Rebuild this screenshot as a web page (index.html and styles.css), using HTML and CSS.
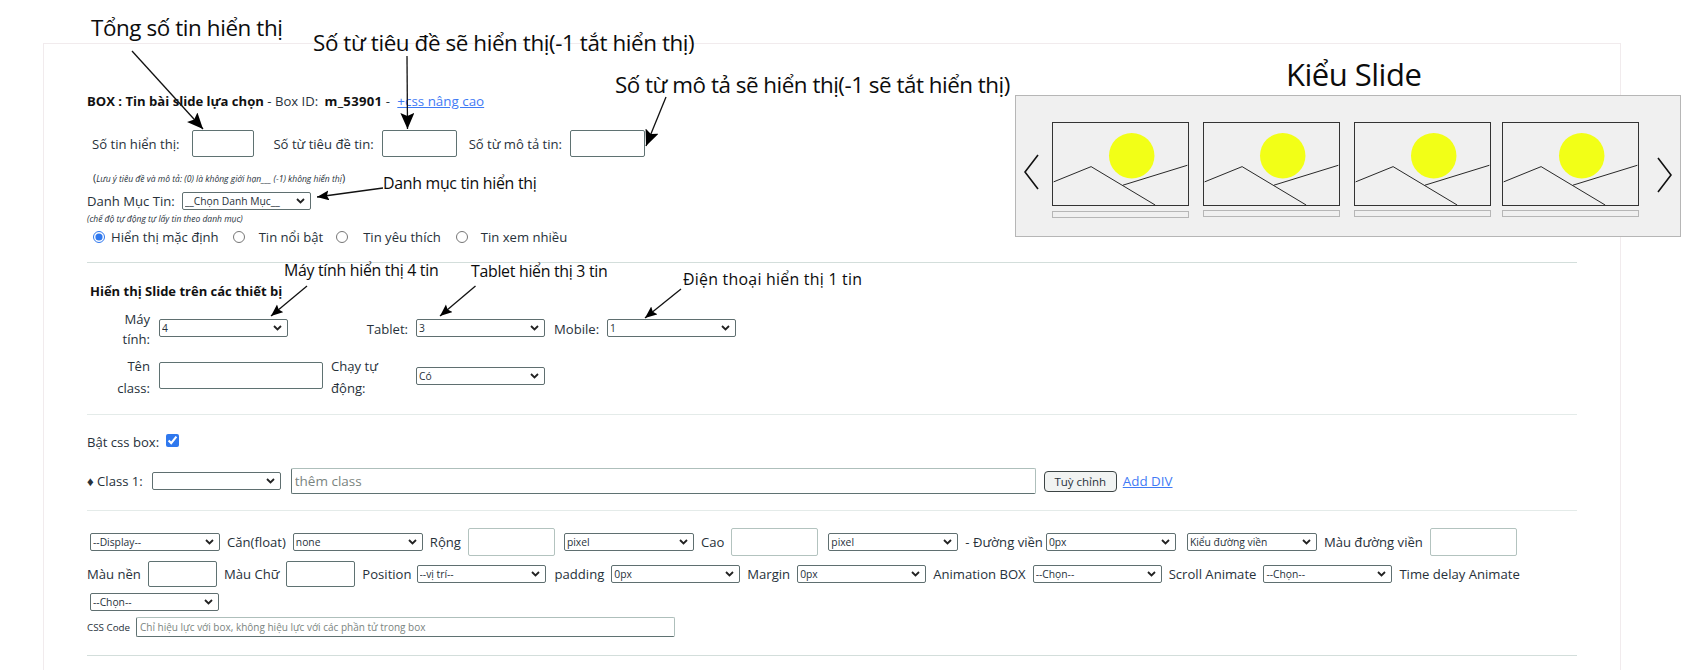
FILE: index.html
```html
<!DOCTYPE html>
<html lang="vi">
<head>
<meta charset="utf-8">
<title>Tin bài slide lựa chọn</title>
<link rel="stylesheet" href="styles.css">
</head>
<body>
<main class="card">
  <div class="head"><b>BOX : Tin bài slide lựa chọn</b> - Box ID: <b class="box-id">m_53901</b> - <a href="#" class="adv">+css nâng cao</a></div>

  <div class="row counts">
    <label class="c1">Số tin hiển thị:</label><input class="field f-count1">
    <label class="c2">Số từ tiêu đề tin:</label><input class="field f-count2">
    <label class="c3">Số từ mô tả tin:</label><input class="field f-count2">
  </div>
  <div class="note"><span class="paren">(</span>Lưu ý tiêu đề và mô tả: (0) là không giới hạn___ (-1) không hiển thị<span class="paren">)</span></div>
  <div class="row cat">
    <label>Danh Mục Tin:</label>
    <select class="sel"><option>__Chọn Danh Mục__</option></select>
  </div>
  <div class="note2">(chế độ tự động tự lấy tin theo danh mục)</div>
  <div class="row radios">
    <input type="radio" name="t" class="r1" checked><label class="t1">Hiển thị mặc định</label>
    <input type="radio" name="t" class="r2"><label class="t2">Tin nổi bật</label>
    <input type="radio" name="t" class="r3"><label class="t3">Tin yêu thích</label>
    <input type="radio" name="t" class="r4"><label class="t4">Tin xem nhiều</label>
  </div>

  <hr class="rule r-a">
  <div class="subhead">Hiển thị Slide trên các thiết bị</div>
  <div class="devices">
    <label class="dl dl-wrap lh20">Máy tính:</label>
    <div class="dc"><select class="sel"><option>4</option></select></div>
    <label class="dl">Tablet:</label>
    <div class="dc"><select class="sel"><option>3</option></select></div>
    <label class="dl">Mobile:</label>
    <div class="dc"><select class="sel"><option>1</option></select></div>
    <label class="dl dl-wrap lh22">Tên class:</label>
    <div class="dc"><input class="field f-class"></div>
    <label class="dl dl-left lh22">Chạy tự động:</label>
    <div class="dc"><select class="sel"><option>Có</option></select></div>
  </div>

  <hr class="rule r-b">
  <div class="row toggle">
    <label>Bật css box:</label><input type="checkbox" class="check" checked>
  </div>
  <div class="row classes">
    <label>♦ Class 1:</label>
    <select class="sel s-class"><option></option></select>
    <input class="field f-wide" placeholder="thêm class">
    <button class="btn" type="button">Tuỳ chỉnh</button>
    <a href="#" class="add">Add DIV</a>
  </div>

  <hr class="rule r-c">
  <div class="row opts o1">
    <select class="sel s130 first"><option>--Display--</option></select>
    <label>Căn(float)</label>
    <select class="sel s130"><option>none</option></select>
    <label>Rộng</label>
    <input class="field f-soft w87">
    <select class="sel s130 gap-m"><option>pixel</option></select>
    <label>Cao</label>
    <input class="field f-soft w87">
    <select class="sel s130 gap-l"><option>pixel</option></select>
    <label>- Đường viền</label>
    <select class="sel s130 tight"><option>0px</option></select>
    <select class="sel s130 gap-x"><option>Kiểu đường viền</option></select>
    <label>Màu đường viền</label>
    <input class="field f-soft w87">
  </div>
  <div class="row opts o2">
    <label>Màu nền</label>
    <input class="field w69">
    <label>Màu Chữ</label>
    <input class="field w69">
    <label>Position</label>
    <select class="sel pull"><option>--vị trí--</option></select>
    <label class="push">padding</label>
    <select class="sel"><option>0px</option></select>
    <label>Margin</label>
    <select class="sel"><option>0px</option></select>
    <label>Animation BOX</label>
    <select class="sel"><option>--Chọn--</option></select>
    <label>Scroll Animate</label>
    <select class="sel"><option>--Chọn--</option></select>
    <label>Time delay Animate</label>
  </div>
  <div class="row o3"><select class="sel first"><option>--Chọn--</option></select></div>
  <div class="row o4">
    <label>CSS Code</label>
    <input class="field f-code" placeholder="Chỉ hiệu lực với box, không hiệu lực với các phần tử trong box">
  </div>
  <hr class="rule r-d">
</main>

<aside class="panel">
  <svg class="chev" viewBox="0 0 16 36" width="16" height="36"><path d="M14 1 1 18 14 35"/></svg>
  <div class="slide">
    <svg class="thumb" viewBox="0 0 137 84" width="137" height="84"><circle cx="80" cy="33.5" r="23.3" class="sun"/><path class="hill" d="M0 60.3 38.4 44.7 104 84M71 63.7 137 43.3"/></svg>
    <div class="bar bar-low"></div>
  </div>
  <div class="slide">
    <svg class="thumb" viewBox="0 0 137 84" width="137" height="84"><circle cx="80" cy="33.5" r="23.3" class="sun"/><path class="hill" d="M0 60.3 38.4 44.7 104 84M71 63.7 137 43.3"/></svg>
    <div class="bar"></div>
  </div>
  <div class="slide">
    <svg class="thumb" viewBox="0 0 137 84" width="137" height="84"><circle cx="80" cy="33.5" r="23.3" class="sun"/><path class="hill" d="M0 60.3 38.4 44.7 104 84M71 63.7 137 43.3"/></svg>
    <div class="bar"></div>
  </div>
  <div class="slide">
    <svg class="thumb" viewBox="0 0 137 84" width="137" height="84"><circle cx="80" cy="33.5" r="23.3" class="sun"/><path class="hill" d="M0 60.3 38.4 44.7 104 84M71 63.7 137 43.3"/></svg>
    <div class="bar"></div>
  </div>
  <svg class="chev chev-r" viewBox="0 0 16 36" width="16" height="36"><path d="M2 1 15 18 2 35"/></svg>
</aside>

<svg class="arrows" viewBox="0 0 1685 670" width="1685" height="670">
  <defs>
    <marker id="head" markerUnits="userSpaceOnUse" markerWidth="18" markerHeight="16" refX="16" refY="7" orient="auto"><path d="M0 0 16 7 0 14 3 7Z"/></marker>
    <marker id="head-s" markerUnits="userSpaceOnUse" markerWidth="14" markerHeight="12" refX="12" refY="5" orient="auto"><path d="M0 0 12 5 0 10 2 5Z"/></marker>
  </defs>
  <path class="ln" marker-end="url(#head)" d="M132 51 203 129"/>
  <path class="ln" marker-end="url(#head)" d="M407 56 407.500 129"/>
  <path class="ln" marker-end="url(#head)" d="M666 97 646 146"/>
  <path class="ln" marker-end="url(#head-s)" d="M383 188 317 197"/>
  <path class="ln" marker-end="url(#head-s)" d="M307 286 271 316"/>
  <path class="ln" marker-end="url(#head-s)" d="M475.500 286 440 316"/>
  <path class="ln" marker-end="url(#head-s)" d="M681 289 645 318"/>
</svg>

<span class="tag big a1">Tổng số tin hiển thị</span>
<span class="tag big a2">Số từ tiêu đề sẽ hiển thị(-1 tắt hiển thị)</span>
<span class="tag big a3">Số từ mô tả sẽ hiển thị(-1 sẽ tắt hiển thị)</span>
<span class="tag title">Kiểu Slide</span>
<span class="tag small a4">Danh mục tin hiển thị</span>
<span class="tag small a5">Máy tính hiển thị 4 tin</span>
<span class="tag small a6">Tablet hiển thị 3 tin</span>
<span class="tag small a7">Điện thoại hiển thị 1 tin</span>
</body>
</html>
```

FILE: styles.css
```css
* { box-sizing: border-box; }
html, body { margin: 0; height: 670px; overflow: hidden; background: #fff; }
body { position: relative; font-family: "Open Sans", "Noto Sans", sans-serif; font-size: 13.100px; color: #27313a; }

.card {
  margin: 43px 0 0 43px;
  width: 1578px;
  height: 660px;
  padding: 47px 43px 0;
  border: 1px solid #f1ebed;
}
.head { height: 20px; line-height: 20px; }
.head b { color: #111; font-weight: 700; }
.head .box-id { margin-left: 3px; letter-spacing: 0.300px; }
.adv { margin-left: 4px; }
a { color: #3f7bf5; font-size: 13.400px; }

.row { display: flex; align-items: center; }
label { white-space: nowrap; }

.field {
  border: 1px solid #5f7272;
  border-radius: 2px;
  background: #fff;
  padding: 0 3px;
  font: inherit;
  outline: none;
}
.sel {
  appearance: none;
  width: 129px;
  height: 18px;
  padding: 0 14px 0 2px;
  border: 1px solid #5f6f70;
  border-radius: 2px;
  background: #fff url("data:image/svg+xml,%3Csvg xmlns='http://www.w3.org/2000/svg' width='9' height='6' viewBox='0 0 9 6'%3E%3Cpath d='M1 1l3.500 3.500L8 1' fill='none' stroke='%23222' stroke-width='1.800'/%3E%3C/svg%3E") no-repeat right 5px center;
  font: 10.300px "Open Sans", "Noto Sans", sans-serif;
  color: #27313a;
  flex: none;
}
.s130 { width: 130px; }

.counts { margin-top: 19px; height: 27px; }
.f-count1 { width: 62px; height: 27px; margin-left: 13px; }
.f-count2 { width: 75px; height: 27px; }
.c1 { margin-left: 5px; }
.c2 { margin-left: 19px; margin-right: 8px; }
.c3 { margin-left: 12px; margin-right: 8px; }

.note { margin-top: 13px; height: 16px; line-height: 16px; padding-left: 6px; font-size: 8.550px; font-style: italic; }
.paren { font-size: 11px; font-style: normal; }
.cat { margin-top: 7px; height: 16px; gap: 7px; }
.note2 { margin-top: 3px; height: 14px; line-height: 14px; font-size: 8.500px; font-style: italic; }

.radios { margin-top: 2px; height: 18px; }
.radios input { width: 12px; height: 12px; margin: 0; flex: none; }
.r1 { margin-left: 6px !important; accent-color: #2f78ee; }
.t1 { margin-left: 6px; }
.r2 { margin-left: 14px !important; }
.r3 { margin-left: 13px !important; }
.r4 { margin-left: 15px !important; }
.t2 { margin-left: 14px; }
.t3 { margin-left: 15px; }
.t4 { margin-left: 13px; }

.rule { margin: 0; height: 1px; border: 0; background: #d3dedb; }
.r-a { margin-top: 16px; }
.r-b { margin-top: 15px; background: #e4ebe9; }
.r-c { margin-top: 16px; background: #e4ebe9; }
.r-d { margin-top: 18px; }

.subhead { margin-top: 18px; height: 20px; line-height: 20px; padding-left: 3px; font-weight: 700; font-size: 13px; color: #111; }
.devices {
  margin-top: 8px;
  display: grid;
  grid-template-columns: 72px 172px 85px 138px 53px 130px;
  grid-template-rows: 40px 44px;
  row-gap: 6px;
  align-items: center;
}
.dl { white-space: normal; text-align: right; padding-right: 8px; }
.dl-wrap { padding-left: 22px; padding-right: 9px; }
.dl-left { text-align: left; padding-right: 22px; }
.lh20 { line-height: 20px; }
.lh22 { line-height: 22px; }
.dc { display: flex; align-items: center; }
.devices .sel { margin-top: -3px; }
.f-class { width: 164px; height: 27px; margin-top: -3px; }

.toggle { margin-top: 17px; height: 20px; }
.check { width: 13px; height: 13px; margin: -3px 0 0 7px; accent-color: #2f78ee; }

.classes { margin-top: 16px; height: 26px; }
.s-class { margin-left: 9px; }
.f-wide {
  width: 745px; height: 26px; margin-left: 10px;
  font-size: 13.500px;
  border-color: #aebfbb #aebfbb #5f7272 #5f7272;
}
.f-wide::placeholder, .f-code::placeholder { color: #7a8480; }
.btn {
  width: 73px; height: 21px; margin-left: 8px; padding: 0;
  background: #f1f3f2;
  border: 1px solid #3c4444;
  border-radius: 4px;
  font: inherit;
  font-size: 11.500px;
  color: #27313a;
}
.add { margin-left: 6px; }

.opts { gap: 7px; }
.o1 { margin-top: 17px; height: 28px; }
.o2 { margin-top: 5px; height: 26px; }
.first { margin-left: 3px; }
.f-soft { border-color: #b3c3bf; height: 28px; }
.w87 { width: 87px; }
.w69 { width: 69px; height: 26px; }
.gap-m { margin-left: 2px; }
.gap-l { margin-left: 3px; }
.gap-x { margin-left: 4px; }
.tight { margin-left: -4px; }
.pull { margin-left: -2px; }
.push { margin-left: 2px; }
.o3 { margin-top: 6px; height: 18px; }
.o4 { margin-top: 6px; height: 20px; gap: 6px; }
.o4 label { font-size: 9.800px; }
.f-code { width: 539px; height: 20px; font-size: 10px; border-color: #aebfbb #aebfbb #5f7272 #5f7272; }

.panel {
  position: absolute;
  left: 1015px;
  top: 95px;
  width: 666px;
  height: 142px;
  padding: 26px 0 0 8px;
  display: flex;
  align-items: flex-start;
  background: #f0f0f0;
  border: 1px solid #b6b6b6;
}
.chev { flex: none; margin: 32px 12px 0 0; fill: none; stroke: #111; stroke-width: 1.600; }
.chev-r { margin: 35px 0 0 16.500px; }
.slide { flex: none; width: 137px; margin-right: 14px; }
.slide:nth-child(4) { margin-right: 11px; }
.slide:nth-child(5) { margin-right: 0; }
.thumb { display: block; border: 1px solid #333; border-bottom-width: 1.500px; }
.sun { fill: #f2ff17; }
.hill { fill: none; stroke: #222; stroke-width: 1; }
.bar { height: 7px; margin-top: 4px; border: 1px solid #b6b6b6; }
.bar-low { margin-top: 5px; }

.arrows { position: absolute; left: 0; top: 0; pointer-events: none; }
.ln { fill: none; stroke: #111; stroke-width: 1.300; }

.tag { position: absolute; white-space: nowrap; color: #0c0c0c; line-height: 1; }
.big { font-size: 22.400px; letter-spacing: -0.400px; }
.small { font-size: 15.900px; letter-spacing: -0.300px; }
.title { left: 1286px; top: 59px; font-size: 31px; letter-spacing: -0.500px; }
.a1 { left: 91px; top: 17px; }
.a2 { left: 313px; top: 32px; }
.a3 { left: 615px; top: 74px; letter-spacing: -0.480px; }
.a4 { left: 383px; top: 176px; }
.a5 { left: 284px; top: 263px; }
.a6 { left: 471px; top: 264px; }
.a7 { left: 683px; top: 272px; letter-spacing: 0.250px; }
```
